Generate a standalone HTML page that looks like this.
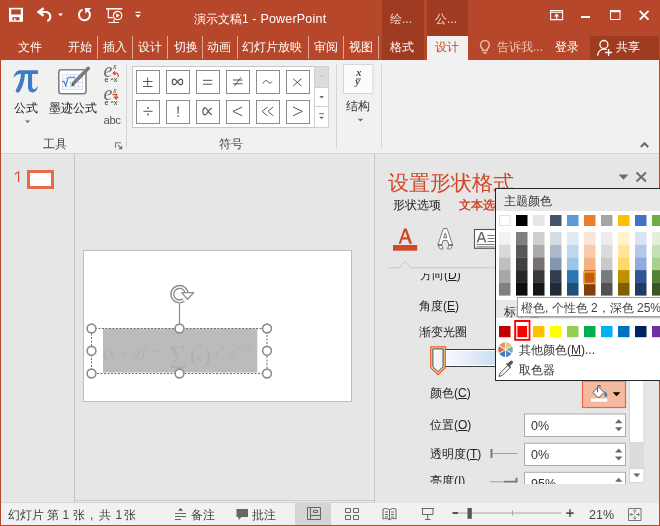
<!DOCTYPE html>
<html><head><meta charset="utf-8">
<style>
*{box-sizing:border-box}
html,body{margin:0;padding:0;width:660px;height:526px;overflow:hidden;background:#e6e6e6;font-family:"Liberation Sans",sans-serif}
.a{position:absolute}
#root{position:absolute;left:0;top:0;width:660px;height:526px;overflow:hidden;will-change:transform}
.t{position:absolute;white-space:nowrap;line-height:1}
#title{left:0;top:0;width:660px;height:60px;background:#b7472a}
.tab{position:absolute;top:41px;font-size:12px;line-height:12px;color:#fff}
.sep{position:absolute;top:36px;width:1px;height:23px;background:#e0a797}
#ribbon{left:1px;top:60px;width:658px;height:94px;background:#f1f1f1;border-bottom:1px solid #d4d4d4}
.gb{position:absolute;width:24px;height:24px;border:1px solid #a6a6a6;background:#fff;font-size:16px;color:#444;text-align:center;line-height:22px}
</style></head><body><div id="root">
<!-- title bar + tabs -->
<div id="title" class="a"></div>
<div class="a" style="left:0;top:60px;width:1px;height:466px;background:#b7472a"></div>
<div class="a" style="left:659px;top:60px;width:1px;height:466px;background:#b7472a"></div>
<div class="a" style="left:0;top:525px;width:660px;height:1px;background:#b7472a"></div>

<!-- contextual headers -->
<div class="a" style="left:382px;top:0;width:42px;height:60px;background:#9f3b21"></div>
<div class="a" style="left:427px;top:0;width:41px;height:36px;background:#9f3b21"></div>
<div class="a" style="left:427px;top:36px;width:41px;height:24px;background:#f1f1f1"></div>
<div class="t" style="left:390px;top:13px;font-size:12px;color:#f3d7cf">绘...</div>
<div class="t" style="left:435px;top:13px;font-size:12px;color:#f3d7cf">公...</div>


<!-- QAT icons -->
<svg class="a" style="left:0;top:0;z-index:5" width="660" height="60" viewBox="0 0 660 60">
 <g fill="none" stroke="#fff">
  <!-- save -->
  <rect x="9" y="7.8" width="14" height="14" fill="#fff" stroke="none"/>
  <rect x="11.2" y="9.4" width="9.6" height="5.1" fill="#b7472a" stroke="none"/>
  <rect x="12.5" y="17.2" width="7" height="3.1" fill="#b7472a" stroke="none"/>
  <rect x="14" y="18.4" width="1.7" height="1.9" fill="#fff" stroke="none"/>
  <!-- undo -->
  <path d="M39.5 12H46.5A4.7 4.7 0 0 1 47.3 21" stroke-width="2.1"/>
  <path d="M43.6 8.3L38.6 12L43.6 15.7" stroke-width="2.4"/>
  <!-- repeat -->
  <path d="M82.6 9.6A5.5 5.5 0 1 0 88 10.6" stroke-width="2"/>
  <path d="M84.8 7.9H91.3L85.6 13.6Z" fill="#fff" stroke="none"/>
  <!-- present -->
  <path d="M106 8.8h16.3" stroke-width="1.5"/>
  <path d="M108.3 9v8.6h4.5" stroke-width="1.2"/>
  <circle cx="117.6" cy="15.5" r="4.2" stroke-width="1.2"/>
  <path d="M108.5 22.5h10.5M114 19.3v3" stroke-width="1.2"/>
 </g>
 <g fill="#fff">
  <path d="M58 13.5h5l-2.5 2.8z"/>
  <path d="M116.2 13.2l3.6 2.3l-3.6 2.3z"/>
  <rect x="135.5" y="11.7" width="5" height="1.3"/>
  <path d="M135.3 14.8h5.4l-2.7 2.9z"/>
 </g>
 <!-- window buttons -->
 <g fill="none" stroke="#fff">
  <path d="M550.6 10.6h12v9h-12z" stroke-width="1.1"/>
  <path d="M551 12.3h11.5" stroke-width="1"/>
  <path d="M556.6 19.5v-4" stroke-width="1.1"/>
  <path d="M553.9 16.4L556.6 13.4L559.3 16.4Z" fill="#fff" stroke="none"/>
  <path d="M581 17h9" stroke-width="2"/>
  <path d="M610.5 11v8.5h9.5v-8.5" stroke-width="1"/>
  <rect x="610" y="10" width="10.5" height="2.2" fill="#fff" stroke="none"/>
  <path d="M639.7 10.8l8.8 8.8M648.5 10.8l-8.8 8.8" stroke-width="1.9"/>
 </g>
 <!-- lightbulb -->
 <g fill="none" stroke="#f0b9a9" stroke-width="1.5">
  <path d="M482.7 50.6V49C481.1 47.8 480.5 46.5 480.5 45A4.4 4.4 0 0 1 489.3 45C489.3 46.5 488.7 47.8 487.1 49V50.6Z"/>
  <path d="M483.2 52.9H486.6"/>
 </g>
 <!-- person -->
 <g fill="none" stroke="#fff" stroke-width="1.3">
  <circle cx="603.9" cy="44.5" r="4"/>
  <path d="M597.6 55.8C598 52 600.3 49.6 603.6 49.2C605 49 606 49.2 606.8 49.5"/>
  <path d="M608.6 49v7M605.2 52.5h6.8"/>
 </g>
</svg>
<div class="t" style="left:194px;top:13px;font-size:12px;color:#fff">演示文稿1<span style="font-size:12.5px;letter-spacing:0.2px"> - PowerPoint</span></div>

<div class="tab" style="left:18px">文件</div>
<div class="tab" style="left:68px">开始</div>
<div class="sep" style="left:97px"></div>
<div class="tab" style="left:103px">插入</div>
<div class="sep" style="left:132px"></div>
<div class="tab" style="left:138px">设计</div>
<div class="sep" style="left:167px"></div>
<div class="tab" style="left:174px">切换</div>
<div class="sep" style="left:202px"></div>
<div class="tab" style="left:207px">动画</div>
<div class="sep" style="left:237px"></div>
<div class="tab" style="left:242px">幻灯片放映</div>
<div class="sep" style="left:308px"></div>
<div class="tab" style="left:314px">审阅</div>
<div class="sep" style="left:343px"></div>
<div class="tab" style="left:349px">视图</div>
<div class="sep" style="left:378px"></div>
<div class="tab" style="left:390px">格式</div>
<div class="tab" style="left:435px;color:#d04424">设计</div>
<div class="tab" style="left:497px;color:#f0c2b5">告诉我...</div>
<div class="tab" style="left:555px">登录</div>
<div class="a" style="left:590px;top:36px;width:69px;height:24px;background:#9f3b21"></div>
<div class="tab" style="left:615.8px">共享</div>

<!-- ribbon -->
<div id="ribbon" class="a"></div>
<div class="t" style="left:14px;top:101.5px;font-size:12px;color:#222">公式</div>
<div class="t" style="left:49px;top:101.5px;font-size:12px;color:#222">墨迹公式</div>
<div class="t" style="left:43px;top:138px;font-size:12px;color:#444">工具</div>
<div class="t" style="left:219px;top:137.5px;font-size:12px;color:#444">符号</div>
<div class="t" style="left:346px;top:100px;font-size:12px;color:#333">结构</div>
<div class="a" style="left:126px;top:65px;width:1px;height:83px;background:#d5d5d5"></div>
<div class="a" style="left:336px;top:64px;width:1px;height:85px;background:#d5d5d5"></div>
<div class="a" style="left:381px;top:65px;width:1px;height:83px;background:#d5d5d5"></div>


<!-- ribbon icons -->
<svg class="a" style="left:0;top:60px" width="660" height="93" viewBox="0 60 660 93">
 <g fill="#3f7cc0">
  <path d="M13.4 77.6C14.5 74 16.3 70.3 20 70.3L38 70.3L38 74L20.5 74C17.5 74 15.5 75.5 13.4 77.6Z"/>
  <path d="M21 73.9L24.9 73.9C24.7 80 22.6 87 19.9 91.2C19.1 92.4 18 92.6 17.1 92.4C16 92.2 15.4 91.2 15.8 90.2C18.6 85 20.8 79.5 21 73.9Z"/>
  <path d="M28 73.9L32.1 73.9L32.1 86C32.1 88.3 32.9 89.2 34.1 89.2C35.4 89.2 36.5 88 37.3 86.2L37.9 86.6C37.3 90 35.4 92.4 32.7 92.4C29.7 92.4 28 90.5 28 87Z"/>
 </g>
 <!-- dropdown arrows -->
 <g fill="#6a6a6a">
  <path d="M25 120.5h5.2l-2.6 2.6z"/>
  <path d="M357.8 118.8h5.4l-2.7 2.8z"/>
 </g>
 <!-- ink equation -->
 <rect x="58.8" y="69.8" width="27.2" height="24" rx="2.5" fill="#fff" stroke="#808080" stroke-width="1.6"/>
 <g stroke="#d5dff0" stroke-width="1" fill="none">
  <path d="M62.5 74.5v15M66.5 74.5v15M70.5 74.5v15M74.5 74.5v15M78.5 74.5v15M82.5 74.5v15"/>
  <path d="M62.5 74.5h20M62.5 78.5h20M62.5 82.5h20M62.5 86.5h20M62.5 89.5h20"/>
 </g>
 <path d="M62.3 81.8l1.6-0.6l1.8 4.6l2.6-8.6h7" fill="none" stroke="#4a7fc1" stroke-width="1.1"/>
 <path d="M88.3 68.3L73.3 83.6" stroke="#7b7b7b" stroke-width="3.6" stroke-linecap="round"/>
 <path d="M71.2 86.3l0.9-3.2l2.3 2.3z" fill="#555"/>
 <!-- e^x icons -->
 <g font-family="Liberation Serif" font-style="italic" fill="#6d6d6d">
  <text x="103.4" y="77.2" font-size="20">e</text>
  <text x="113" y="69.4" font-size="8" fill="#4d4d4d">x</text>
  <text x="103.4" y="99.9" font-size="20">e</text>
  <text x="113" y="92.6" font-size="8" fill="#4d4d4d">x</text>
 </g>
 <g font-family="Liberation Sans" fill="#333" font-size="7.5">
  <text x="104.6" y="82">e</text><text x="113.8" y="82">x</text>
  <text x="104.6" y="104.8">e</text><text x="113.8" y="104.8">x</text>
  <path d="M111 80.2l1.1-1.8l1.1 1.8M111 103l1.1-1.8l1.1 1.8" stroke="#444" stroke-width="0.8" fill="none"/>
 </g>
 <g stroke="#d9472a" stroke-width="1.3" fill="none">
  <path d="M113.5 73.2h2.5a2.2 2.2 0 0 1 2.2 2.2v1.6"/>
  <path d="M115.2 71.5l-1.9 1.7l1.9 1.7"/>
  <path d="M112.5 94.5h5"/>
  <path d="M116 95v3.5M113.8 96.6l2.2 2.2l2.2-2.2"/>
 </g>
 <text x="103.5" y="123.8" font-family="Liberation Sans" font-size="11.3" fill="#555" letter-spacing="-0.4">abc</text>
 <!-- dialog launcher -->
 <path d="M115.5 147.8V142.7H121" stroke="#7a7a7a" stroke-width="1.1" fill="none"/>
 <path d="M118 145.2L120.5 147.7" stroke="#7a7a7a" stroke-width="1.2"/>
 <path d="M122.2 145.4V149.2H118.4Z" fill="#6a6a6a"/>
 <!-- structure fraction -->
 <rect x="343.5" y="64.5" width="29.5" height="29" fill="#fbfbfb" stroke="#d6d6d6"/>
 <g font-family="Liberation Serif" font-style="italic" font-weight="bold" fill="#444" font-size="9">
  <text x="356.2" y="76" font-size="10.5">x</text>
  <text x="355.2" y="85" font-size="10.5">y</text>
 </g>
 <rect x="356" y="78.5" width="5" height="1" fill="#555"/>
 <!-- collapse caret -->
 <path d="M640.8 147L644.5 143.2L648.2 147" stroke="#6a6a6a" stroke-width="2" fill="none"/>
</svg>
<!-- symbol gallery -->
<div class="a" style="left:132px;top:66px;width:197px;height:62px;border:1px solid #c8c8c8;background:#fff"></div>
<svg class="a" style="left:0;top:60px;z-index:3" width="340" height="80" viewBox="0 60 340 80">
 <g fill="#fff" stroke="#8c8c8c" stroke-width="1">
  <rect x="136.5" y="70.5" width="23" height="23"/><rect x="166.5" y="70.5" width="23" height="23"/>
  <rect x="196.5" y="70.5" width="23" height="23"/><rect x="226.5" y="70.5" width="23" height="23"/>
  <rect x="256.5" y="70.5" width="23" height="23"/><rect x="286.5" y="70.5" width="23" height="23"/>
  <rect x="136.5" y="100.5" width="23" height="23"/><rect x="166.5" y="100.5" width="23" height="23"/>
  <rect x="196.5" y="100.5" width="23" height="23"/><rect x="226.5" y="100.5" width="23" height="23"/>
  <rect x="256.5" y="100.5" width="23" height="23"/><rect x="286.5" y="100.5" width="23" height="23"/>
 </g>
 <g fill="none" stroke="#555" stroke-width="1">
  <path d="M143 81.5h9.5M147.7 77.5v8M143 86.5h9.5"/>
  <path d="M177.45 81.9C176 79.9 175 79.1 174.3 79.1C173 79.1 172.3 80.3 172.3 81.9C172.3 83.5 173 84.7 174.3 84.7C175 84.7 176 83.9 177.45 81.9C178.9 79.9 179.9 79.1 180.6 79.1C181.9 79.1 182.6 80.3 182.6 81.9C182.6 83.5 181.9 84.7 180.6 84.7C179.9 84.7 178.9 83.9 177.45 81.9Z" stroke-width="1.2"/>
  <path d="M203 80.3h9.3M203 84.2h9.3"/>
  <path d="M143.5 111.3h9"/>
  <path d="M212 108.3C210.3 108.3 209.2 109.8 208.2 111.4C207.2 113 206.6 114.9 205 114.9C203.6 114.9 202.9 113.3 202.9 111.4C202.9 109.5 203.6 107.9 205 107.9C206.6 107.9 207.2 109.8 208.2 111.4C209.2 113 210.3 114.6 212 114.6" stroke-width="1.1"/>
  <path d="M233 80h9.5M233 83.8h9.5M241 77.3l-6.5 9"/>
  <path d="M263 83.5c1.2-2.2 2.2-3 3.1-3c1.6 0 2.2 2.6 3.6 2.6c0.9 0 1.6-0.6 2.3-1.8"/>
  <path d="M293.2 78.7l8.2 7.3M301.4 78.7l-8.2 7.3"/>
  <path d="M242.3 107l-9.3 4.4l9.3 4.4"/>
  <path d="M267.5 107l-5.3 4.4l5.3 4.4M273.2 107l-5.3 4.4l5.3 4.4"/>
  <path d="M293 107l9.3 4.4l-9.3 4.4"/>
 </g>
 <g fill="#555">
  <circle cx="148" cy="108" r="0.9"/><circle cx="148" cy="114.5" r="0.9"/>
  <path d="M177.3 106.6h1.6l-0.4 7.5h-0.8z"/><rect x="177.4" y="115.3" width="1.4" height="1.5"/>
 </g>
 <!-- scroll column -->
 <rect x="314.5" y="66.5" width="14" height="21" fill="#dcdcdc" stroke="#d0d0d0"/>
 <rect x="314.5" y="87.5" width="14" height="19" fill="#fff" stroke="#d0d0d0"/>
 <rect x="314.5" y="106.5" width="14" height="21" fill="#fff" stroke="#d0d0d0"/>
 <g fill="#6a6a6a">
  <path d="M319.3 96h4.6l-2.3 2.5z"/>
  <path d="M319.3 116.8h4.6l-2.3 2.5z"/>
  <rect x="319.2" y="113.2" width="4.8" height="1"/>
  <path d="M319.3 77h4.6l-2.3-2.3z" fill="#c4c4c4"/>
 </g>
</svg>
<!-- slide panel -->
<div class="a" style="left:74px;top:154px;width:1px;height:349px;background:#c6c6c6"></div>
<svg class="a" style="left:0;top:160px" width="30" height="30" viewBox="0 160 30 30"><path d="M14.8 174.3L18.6 171.9V181.9" fill="none" stroke="#c94a2c" stroke-width="1.1"/></svg>
<div class="a" style="left:27px;top:170px;width:27px;height:19px;border:3px solid #e96a4a;background:#fff"></div>
<div class="a" style="left:374px;top:154px;width:1px;height:349px;background:#c6c6c6"></div>

<!-- slide -->
<div class="a" style="left:83px;top:250px;width:269px;height:152px;background:#fff;border:1px solid #bdbdbd"></div>
<svg class="a" style="left:80px;top:270px" width="200" height="115" viewBox="80 270 200 115">
 <rect x="103" y="328.5" width="154.3" height="44" fill="#bbbbbb"/>
 <g fill="#abb1b8" font-family="Liberation Serif">
  <text x="103.5" y="357.5" font-size="15" font-style="italic">(x + a)</text>
  <text x="144" y="348.5" font-size="8" font-style="italic">n</text>
  <text x="154" y="357.5" font-size="15">=</text>
  <text x="169" y="363" font-size="25">∑</text>
  <text x="190" y="362" font-size="22" transform="scale(1 1)">(</text>
  <text x="203.5" y="362" font-size="22">)</text>
  <text x="197.5" y="349" font-size="8" font-style="italic">n</text>
  <text x="197" y="361" font-size="9" font-style="italic">k</text>
  <text x="213.5" y="357.5" font-size="14" font-style="italic">x</text>
  <text x="221" y="350" font-size="8" font-style="italic">k</text>
  <text x="228.5" y="357.5" font-size="14" font-style="italic">a</text>
  <text x="237" y="350" font-size="8" font-style="italic" letter-spacing="0.8">n−k</text>
 </g>
 <rect x="91.5" y="328.5" width="175.5" height="45" fill="none" stroke="#6e6e6e" stroke-width="1" stroke-dasharray="2 1.5"/>
 <path d="M179.5 303.5V323.5" stroke="#8c8c8c" stroke-width="1.2"/>
 <!-- rotate handle -->
 <path d="M183.6 300.1A7.2 7.2 0 1 1 186.7 294.2" fill="none" stroke="#8c8c8c" stroke-width="4.2"/>
 <path d="M183.6 300.1A7.2 7.2 0 1 1 186.7 294.2" fill="none" stroke="#fff" stroke-width="1.5"/>
 <path d="M181.8 292.6H193.8L187.5 299.3Z" fill="#fff" stroke="#8c8c8c" stroke-width="1.3" stroke-linejoin="round"/>
 <g fill="#fff" stroke="#8c8c8c" stroke-width="1.6">
  <circle cx="91.5" cy="328.5" r="4.4"/><circle cx="179.5" cy="328.5" r="4.4"/><circle cx="267" cy="328.5" r="4.4"/>
  <circle cx="91.5" cy="350.8" r="4.4"/><circle cx="267" cy="350.8" r="4.4"/>
  <circle cx="91.5" cy="373.5" r="4.4"/><circle cx="179.5" cy="373.5" r="4.4"/><circle cx="267" cy="373.5" r="4.4"/>
 </g>
</svg>
<!-- status bar -->
<div class="a" style="left:75px;top:154px;width:299px;height:347px;border-bottom:1px solid #cdcdcd"></div>
<div class="a" style="left:370px;top:154px;width:4px;height:346px;background:#eaeaea"></div>
<div class="a" style="left:1px;top:502px;width:658px;height:23px;background:#f1f1f1;border-top:1px solid #d6d6d6"></div>
<div class="a" style="left:295px;top:503px;width:36px;height:22px;background:#d4d4d4"></div>
<div class="t" style="left:7.5px;top:509px;font-size:12px;color:#444">幻灯片</div>
<div class="t" style="left:46.5px;top:509px;font-size:12px;color:#444">第</div>
<div class="t" style="left:62.5px;top:509px;font-size:12px;color:#444">1</div>
<div class="t" style="left:73px;top:509px;font-size:12px;color:#444">张</div>
<div class="t" style="left:90px;top:509px;font-size:12px;color:#444">,</div>
<div class="t" style="left:98.5px;top:509px;font-size:12px;color:#444">共</div>
<div class="t" style="left:115.5px;top:509px;font-size:12px;color:#444">1</div>
<div class="t" style="left:124px;top:509px;font-size:12px;color:#444">张</div>
<div class="t" style="left:191px;top:509px;font-size:12px;color:#444">备注</div>
<div class="t" style="left:252px;top:509px;font-size:12px;color:#444">批注</div>
<div class="t" style="left:589px;top:509px;font-size:12.5px;color:#444">21%</div>
<svg class="a" style="left:0;top:500px" width="660" height="26" viewBox="0 500 660 26">
 <g fill="none" stroke="#666" stroke-width="1">
  <path d="M175 513.5h11M175 516.5h11M175 519.5h6" stroke-width="1.1"/>
  <path d="M307.5 507.5h13v12h-13zM310.5 507.5v12M310.5 515.5h10M313.5 510.5h4v2h-4z"/>
  <path d="M345.5 508.5h5v4h-5zM353.5 508.5h5v4h-5zM345.5 515.5h5v4h-5zM353.5 515.5h5v4h-5z"/>
  <path d="M383 509c2 -0.7 4.5 -0.7 6.5 0.8c2 -1.5 4.5 -1.5 6.5 -0.8v10c-2 -0.7 -4.5 -0.7 -6.5 0.8c-2 -1.5 -4.5 -1.5 -6.5 -0.8zM389.5 509.8v10M385 512h3M385 514.5h3M385 517h3M391 512h3M391 514.5h3M391 517h3"/>
  <path d="M421.5 508.5h12.5M422.5 508.5v6h10.5v-6M427.7 514.5v5M425 519.5h5.5"/>
  <path d="M458 513h103.5" stroke="#a6a6a6"/>
  <path d="M512.5 510.5v5" stroke="#a6a6a6"/>
  <path d="M628.5 508.5h12.5v12h-12.5z" stroke="#777"/>
 </g>
 <rect x="452.5" y="512" width="5.5" height="2" fill="#555"/>
 <path d="M178 510.8L180.5 508L183 510.8z" fill="#555"/>
 <rect x="467.5" y="508" width="4.3" height="10.8" fill="#555"/>
 <path d="M566.2 512.3h7.5v1.6h-7.5zM569.2 509.3h1.6v7.5h-1.6z" fill="#555"/>
 <path d="M236.5 509h11.5v8h-6.5l-3 3v-3h-2z" fill="#666"/>
 <g fill="none" stroke="#777" stroke-width="0.9">
  <path d="M634.8 509.8v3.5M633.3 511.3l1.5-1.5l1.5 1.5M634.8 519.2v-3.5M633.3 517.7l1.5 1.5l1.5-1.5M630 514.5h3.5M631.5 513l-1.5 1.5l1.5 1.5M639.5 514.5h-3.5M638 513l1.5 1.5l-1.5 1.5"/>
 </g>
</svg>
<!-- format pane -->
<div class="t" style="left:388px;top:171.5px;font-size:21px;color:#d24726">设置形状格式</div>
<div class="t" style="left:393px;top:199px;font-size:12px;color:#222">形状选项</div>
<div class="t" style="left:459px;top:199px;font-size:12px;color:#d24726;font-weight:bold">文本选项</div>
<svg class="a" style="left:375px;top:153px" width="285" height="350" viewBox="375 153 285 350">
 <!-- pane header controls -->
 <path d="M618.5 174.5h10l-5 5.3z" fill="#6d6d6d"/>
 <path d="M636.5 172.5l9.5 9M646 172.5l-9.5 9" stroke="#6d6d6d" stroke-width="2"/>
 <!-- icons -->
 <path d="M398.6 243.7L404 228.5h2.7L412.1 243.7h-2.8l-1.4-4.1h-5.6l-1.4 4.1zM403.1 237.3h4.1l-2.05-6z" fill="#d24726"/>
 <rect x="393" y="245" width="24.2" height="5.7" fill="#d24726"/>
 <path d="M443.4 228.5L447.1 228.5L452.6 245L450.4 249L447.6 249L448.8 245L447.5 240.6L443 240.6L441.7 245L442.9 249L440.1 249L437.9 245ZM445.25 232.8L443.6 237.8L446.9 237.8Z" fill="#fff" stroke="#7a7a7a" stroke-width="1" fill-rule="evenodd" stroke-linejoin="round"/>
 <path d="M437.9 245H441.7M448.8 245H452.6" stroke="#555" stroke-width="1.4"/>
 <rect x="474.5" y="229.5" width="22" height="18.8" fill="#fff" stroke="#555" stroke-width="1.1"/>
 <path d="M476.5 242.5L480.5 232h2l4 10.5h-1.8l-1-2.8h-4.4l-1 2.8zM479.8 238.2h3.3l-1.65-4.6z" fill="#6a6a6a"/>
 <path d="M487.5 235.5h7M487.5 238.5h7M487.5 241.5h7M476.5 244.5h18M476.5 246.8h18" stroke="#6a6a6a" stroke-width="0.9"/>
 <!-- tab indicator -->
 <path d="M388 267.8H399.5L405 261L410.5 267.8H660" fill="none" stroke="#c8c8c8" stroke-width="1"/>
</svg>
<div class="a" style="left:375px;top:273px;width:255px;height:211px;overflow:hidden">
 <div class="t" style="left:45px;top:-4.5px;font-size:12px;color:#222">方向(<u>D</u>)</div>
</div>
<div class="t" style="left:419px;top:300px;font-size:12px;color:#222">角度(<u>E</u>)</div>
<div class="t" style="left:419px;top:325.5px;font-size:12px;color:#222">渐变光圈</div>
<div class="t" style="left:430px;top:387px;font-size:12px;color:#222">颜色(<u>C</u>)</div>
<div class="t" style="left:430px;top:419px;font-size:12px;color:#222">位置(<u>O</u>)</div>
<div class="t" style="left:430px;top:448px;font-size:12px;color:#222">透明度(<u>T</u>)</div>
<div class="a" style="left:375px;top:470px;width:255px;height:14px;overflow:hidden">
 <div class="t" style="left:55px;top:5px;font-size:12px;color:#222">亮度(<u>I</u>)</div>
</div>
<svg class="a" style="left:375px;top:153px" width="285" height="350" viewBox="375 153 285 350">
 <defs><linearGradient id="gb" x1="0" x2="1"><stop offset="0" stop-color="#ffffff"/><stop offset="1" stop-color="#c2d8ef"/></linearGradient>
 <linearGradient id="gm" x1="0" x2="1"><stop offset="0" stop-color="#fdfdfd"/><stop offset="1" stop-color="#e9eef5"/></linearGradient></defs>
 <rect x="436.5" y="349.5" width="70" height="17" fill="url(#gb)" stroke="#3a3a3a"/>
 <path d="M437 350.5H506M437 365.5H506" stroke="#fff" stroke-width="1"/>
 <path d="M430.8 346.8h14.4v21l-7.2 6.8l-7.2-6.8z" fill="url(#gm)" stroke="#f2521d" stroke-width="1.3"/>
 <path d="M431.9 347.9h12.2v19.4l-6.1 5.7l-6.1-5.7z" fill="none" stroke="#f3b33d" stroke-width="0.8"/>
 <path d="M432.9 348.9h10.2v17.9l-5.1 4.8l-5.1-4.8z" fill="none" stroke="#333" stroke-width="0.9"/>
 <!-- color button -->
 <rect x="582.5" y="381" width="43" height="26.5" fill="#f4b99f" stroke="#e8653f" stroke-width="1.2"/>
 <path d="M598.5 386.8l5.6 5.6l-5.6 5.6l-5.6-5.6z" fill="#fff" stroke="#555" stroke-width="1"/>
 <path d="M597.5 392.3v-5.5a1.5 1.5 0 0 1 3 0" fill="none" stroke="#555" stroke-width="1"/>
 <path d="M604.5 391.3c1.8 1 2.8 2.6 2.8 4c0 1.2-0.7 1.8-1.4 1.8s-1.4-0.6-1.4-1.8z" fill="#3f7dc1"/>
 <rect x="591" y="398.5" width="16.2" height="3.2" fill="#fff"/>
 <path d="M612.7 392.2h7.7l-3.85 4z" fill="#000"/>
 <!-- spin boxes -->
 <rect x="524.5" y="414" width="101" height="22.5" fill="#fff" stroke="#ababab"/>
 <rect x="524.5" y="443.2" width="101" height="22.3" fill="#fff" stroke="#ababab"/>
 <rect x="524.5" y="472.3" width="101" height="23" fill="#fff" stroke="#ababab"/>
 <g fill="#6a6a6a">
  <path d="M615 423.2h7.4l-3.7-4z"/><path d="M615 427.3h7.4l-3.7 4z"/>
  <path d="M615 452.5h7.4l-3.7-4z"/><path d="M615 456.6h7.4l-3.7 4z"/>
  <path d="M615 481.8h7.4l-3.7-4z"/>
 </g>
 <!-- sliders -->
 <rect x="490.5" y="449" width="2" height="9" fill="#777"/>
 <rect x="492" y="453" width="25.5" height="1" fill="#a0a0a0"/>
 <rect x="490" y="481.3" width="27" height="1" fill="#a0a0a0"/>
 <rect x="515.5" y="477.8" width="2" height="4.5" fill="#777"/>
 <rect x="504" y="480.8" width="13" height="1.6" fill="#777"/>
 <!-- pane scrollbar -->
 <rect x="629.5" y="268" width="14.5" height="174.5" fill="#fff" stroke="#d6d6d6"/>
 <rect x="629.5" y="442.5" width="14.5" height="26" fill="#dcdcdc"/>
 <rect x="629.5" y="468.5" width="14.5" height="14" fill="#fff" stroke="#d6d6d6"/>
 <path d="M633.3 473.6h7l-3.5 3.6z" fill="#6a6a6a"/>
</svg>
<div class="t" style="left:531px;top:419.5px;font-size:12.5px;color:#333">0%</div>
<div class="t" style="left:531px;top:448.5px;font-size:12.5px;color:#333">0%</div>
<div class="a" style="left:525px;top:473px;width:100px;height:11px;overflow:hidden">
 <div class="t" style="left:6px;top:5px;font-size:12.5px;color:#333">95%</div>
</div>
<!-- bottom cover of pane -->
<div class="a" style="left:375px;top:484px;width:284px;height:19px;background:#e6e6e6"></div>

<!-- popup -->
<div class="a" style="left:495px;top:188px;width:170px;height:193px;background:#fff;border:1px solid #262626"></div>
<div class="a" style="left:496px;top:189px;width:164px;height:22px;background:#e8e8e8"></div>
<div class="a" style="left:496px;top:300px;width:164px;height:18px;background:#e8e8e8"></div>
<div class="t" style="left:504px;top:195px;font-size:12px;color:#333">主题颜色</div>
<div class="t" style="left:504px;top:306px;font-size:12px;color:#333">标准色</div>
<svg class="a" style="left:495px;top:188px" width="165" height="193" viewBox="495 188 165 193">
 <rect x="499" y="215" width="11.5" height="11" fill="#FFFFFF"/>
 <rect x="499" y="232.0" width="11.5" height="12.8" fill="#F2F2F2"/>
 <rect x="499" y="244.7" width="11.5" height="12.8" fill="#D9D9D9"/>
 <rect x="499" y="257.4" width="11.5" height="12.8" fill="#BFBFBF"/>
 <rect x="499" y="270.1" width="11.5" height="12.8" fill="#A6A6A6"/>
 <rect x="499" y="282.8" width="11.5" height="12.8" fill="#808080"/>
 <rect x="516" y="215" width="11.5" height="11" fill="#000000"/>
 <rect x="516" y="232.0" width="11.5" height="12.8" fill="#7F7F7F"/>
 <rect x="516" y="244.7" width="11.5" height="12.8" fill="#595959"/>
 <rect x="516" y="257.4" width="11.5" height="12.8" fill="#404040"/>
 <rect x="516" y="270.1" width="11.5" height="12.8" fill="#262626"/>
 <rect x="516" y="282.8" width="11.5" height="12.8" fill="#0D0D0D"/>
 <rect x="533" y="215" width="11.5" height="11" fill="#E7E6E6"/>
 <rect x="533" y="232.0" width="11.5" height="12.8" fill="#D0CECE"/>
 <rect x="533" y="244.7" width="11.5" height="12.8" fill="#AEAAAA"/>
 <rect x="533" y="257.4" width="11.5" height="12.8" fill="#757171"/>
 <rect x="533" y="270.1" width="11.5" height="12.8" fill="#3A3838"/>
 <rect x="533" y="282.8" width="11.5" height="12.8" fill="#161616"/>
 <rect x="550" y="215" width="11.5" height="11" fill="#44546A"/>
 <rect x="550" y="232.0" width="11.5" height="12.8" fill="#D6DCE4"/>
 <rect x="550" y="244.7" width="11.5" height="12.8" fill="#ADB9CA"/>
 <rect x="550" y="257.4" width="11.5" height="12.8" fill="#8497B0"/>
 <rect x="550" y="270.1" width="11.5" height="12.8" fill="#333F4F"/>
 <rect x="550" y="282.8" width="11.5" height="12.8" fill="#222A35"/>
 <rect x="567" y="215" width="11.5" height="11" fill="#5B9BD5"/>
 <rect x="567" y="232.0" width="11.5" height="12.8" fill="#DEEBF7"/>
 <rect x="567" y="244.7" width="11.5" height="12.8" fill="#BDD7EE"/>
 <rect x="567" y="257.4" width="11.5" height="12.8" fill="#9DC3E6"/>
 <rect x="567" y="270.1" width="11.5" height="12.8" fill="#2E75B6"/>
 <rect x="567" y="282.8" width="11.5" height="12.8" fill="#1F4E79"/>
 <rect x="584" y="215" width="11.5" height="11" fill="#ED7D31"/>
 <rect x="584" y="232.0" width="11.5" height="12.8" fill="#FBE5D6"/>
 <rect x="584" y="244.7" width="11.5" height="12.8" fill="#F8CBAD"/>
 <rect x="584" y="257.4" width="11.5" height="12.8" fill="#F4B183"/>
 <rect x="584" y="270.1" width="11.5" height="12.8" fill="#C55A11"/>
 <rect x="584" y="282.8" width="11.5" height="12.8" fill="#843C0C"/>
 <rect x="601" y="215" width="11.5" height="11" fill="#A5A5A5"/>
 <rect x="601" y="232.0" width="11.5" height="12.8" fill="#EDEDED"/>
 <rect x="601" y="244.7" width="11.5" height="12.8" fill="#DBDBDB"/>
 <rect x="601" y="257.4" width="11.5" height="12.8" fill="#C9C9C9"/>
 <rect x="601" y="270.1" width="11.5" height="12.8" fill="#7B7B7B"/>
 <rect x="601" y="282.8" width="11.5" height="12.8" fill="#525252"/>
 <rect x="618" y="215" width="11.5" height="11" fill="#FFC000"/>
 <rect x="618" y="232.0" width="11.5" height="12.8" fill="#FFF2CC"/>
 <rect x="618" y="244.7" width="11.5" height="12.8" fill="#FFE699"/>
 <rect x="618" y="257.4" width="11.5" height="12.8" fill="#FFD966"/>
 <rect x="618" y="270.1" width="11.5" height="12.8" fill="#BF9000"/>
 <rect x="618" y="282.8" width="11.5" height="12.8" fill="#7F6000"/>
 <rect x="635" y="215" width="11.5" height="11" fill="#4472C4"/>
 <rect x="635" y="232.0" width="11.5" height="12.8" fill="#DAE3F3"/>
 <rect x="635" y="244.7" width="11.5" height="12.8" fill="#B4C7E7"/>
 <rect x="635" y="257.4" width="11.5" height="12.8" fill="#8FAADC"/>
 <rect x="635" y="270.1" width="11.5" height="12.8" fill="#2F5597"/>
 <rect x="635" y="282.8" width="11.5" height="12.8" fill="#203864"/>
 <rect x="652" y="215" width="11.5" height="11" fill="#70AD47"/>
 <rect x="652" y="232.0" width="11.5" height="12.8" fill="#E2F0D9"/>
 <rect x="652" y="244.7" width="11.5" height="12.8" fill="#C5E0B4"/>
 <rect x="652" y="257.4" width="11.5" height="12.8" fill="#A9D18E"/>
 <rect x="652" y="270.1" width="11.5" height="12.8" fill="#548235"/>
 <rect x="652" y="282.8" width="11.5" height="12.8" fill="#385723"/>
 <rect x="499" y="326" width="11.5" height="11.2" fill="#C00000"/>
 <rect x="516" y="326" width="11.5" height="11.2" fill="#FF0000"/>
 <rect x="533" y="326" width="11.5" height="11.2" fill="#FFC000"/>
 <rect x="550" y="326" width="11.5" height="11.2" fill="#FFFF00"/>
 <rect x="567" y="326" width="11.5" height="11.2" fill="#92D050"/>
 <rect x="584" y="326" width="11.5" height="11.2" fill="#00B050"/>
 <rect x="601" y="326" width="11.5" height="11.2" fill="#00B0F0"/>
 <rect x="618" y="326" width="11.5" height="11.2" fill="#0070C0"/>
 <rect x="635" y="326" width="11.5" height="11.2" fill="#002060"/>
 <rect x="652" y="326" width="11.5" height="11.2" fill="#7030A0"/>
 <rect x="499.5" y="215.5" width="10.5" height="10" fill="none" stroke="#e0e0e0"/>
 <rect x="583.8" y="271.9" width="11.4" height="11.6" fill="none" stroke="#f2b035" stroke-width="1.5"/>
 <rect x="515.2" y="321" width="14.2" height="18.8" fill="none" stroke="#ff0000" stroke-width="2"/>
 <rect x="516.8" y="322.6" width="11" height="15.6" fill="none" stroke="#fff" stroke-width="1.2"/>
 <!-- color wheel -->
 <g transform="translate(505.5 349.6)">
  <path d="M0 0L0 -7.3A7.3 7.3 0 0 1 6.3 -3.65Z" fill="#e8c08a"/>
  <path d="M0 0L6.3 -3.65A7.3 7.3 0 0 1 6.3 3.65Z" fill="#7fae9a"/>
  <path d="M0 0L6.3 3.65A7.3 7.3 0 0 1 0 7.3Z" fill="#4f88c6"/>
  <path d="M0 0L0 7.3A7.3 7.3 0 0 1 -6.3 3.65Z" fill="#3f7dc1"/>
  <path d="M0 0L-6.3 3.65A7.3 7.3 0 0 1 -6.3 -3.65Z" fill="#e0663f"/>
  <path d="M0 0L-6.3 -3.65A7.3 7.3 0 0 1 0 -7.3Z" fill="#e8955a"/>
  <path d="M0 -7.5V7.5M-6.5 -3.75L6.5 3.75M-6.5 3.75L6.5 -3.75" stroke="#fff" stroke-width="0.9"/>
 </g>
 <!-- eyedropper -->
 <path d="M499 376.5l1.2-3.5l8-8l2.3 2.3l-8 8z" fill="#fff" stroke="#555" stroke-width="1"/>
 <path d="M507 364.3l3.2-3.2a1.6 1.6 0 0 1 2.3 2.3l-3.2 3.2z" fill="#555"/>
 <path d="M506.5 363.5l4 4" stroke="#555" stroke-width="1.6"/>
</svg>
<div class="t" style="left:519px;top:344px;font-size:12px;color:#333">其他颜色(<u>M</u>)...</div>
<div class="t" style="left:519px;top:364px;font-size:12px;color:#333">取色器</div>
<!-- tooltip -->
<div class="a" style="left:517px;top:297px;width:150px;height:20px;background:#fff;border:1px solid #a0a0a0;box-shadow:1px 1px 2px rgba(0,0,0,0.25)"></div>
<div class="t" style="left:521px;top:302px;font-size:12px;color:#444">橙色, 个性色 2，深色 25%</div>
</div></body></html>
